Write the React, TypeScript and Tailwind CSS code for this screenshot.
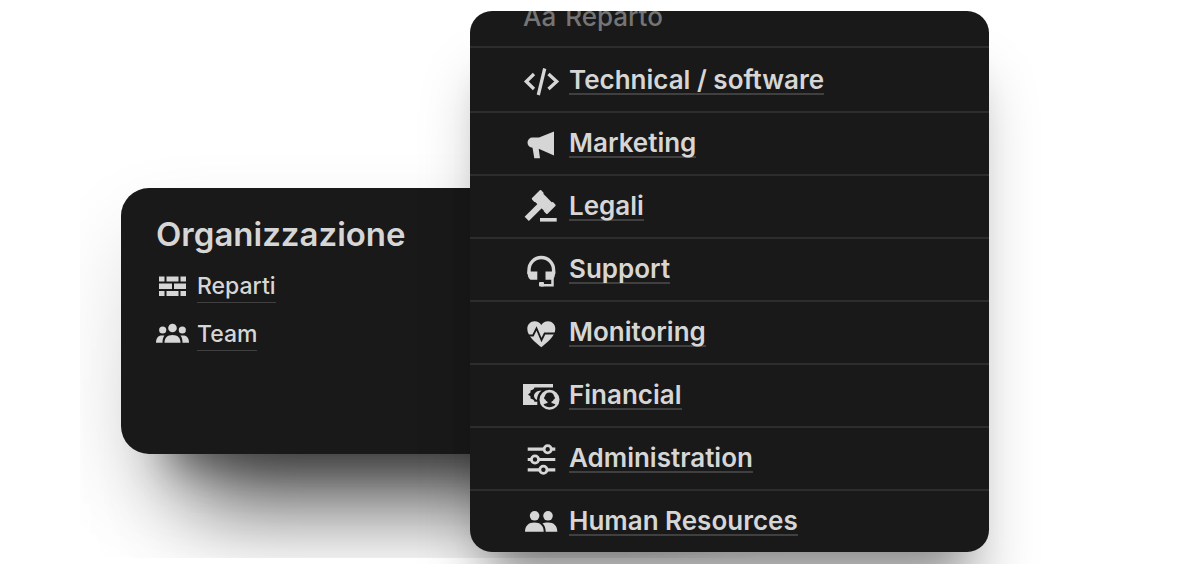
import type { ReactNode } from 'react';

interface Item {
  label: string;
  icon: ReactNode;
}

const pages: Item[] = [
  {
    label: 'Reparti',
    icon: (
      <>
        <path d="M3 6.5h5.5v5H3zM10.5 6.5h12v5h-12zM24.5 6.5H30v5h-5.5z" />
        <path d="M3 13.5h13V19H3zM18 13.5h12V19H18z" />
        <path d="M3 21h5.5v5H3zM10.5 21h12v5h-12zM24.5 21H30v5h-5.5z" />
      </>
    ),
  },
  {
    label: 'Team',
    icon: (
      <>
        <circle cx="16.5" cy="10" r="4.3" />
        <circle cx="6.7" cy="12" r="3.6" />
        <circle cx="26.3" cy="12" r="3.6" />
        <path d="M8.5 24.7c0-5 3-7.7 8-7.7s8 2.7 8 7.7z" />
        <path d="M0 24.7c0-4.5 2-7.2 6-7.2h2.5C7 19.5 6.5 22 6.5 24.7z" />
        <path d="M33 24.7c0-4.5-2-7.2-6-7.2h-2.5c1.5 2 2 4.5 2 7.2z" />
      </>
    ),
  },
];

const departments: Item[] = [
  {
    label: 'Technical / software',
    icon: <path d="M11 11L3.3 18.5L11 26M25.5 11L33.7 18.5L25.5 26M21.7 5.5L15.3 32" fill="none" stroke="currentColor" strokeWidth="3.3" />,
  },
  {
    label: 'Marketing',
    icon: <path d="M31 5.5L16 11.5H9.5a5 5.100 0 0 0 0 10.2L11.3 32.3H17L15.700 22.7L31 29.5z" />,
  },
  {
    label: 'Legali',
    icon: (
      <>
        <g transform="translate(20.7 13) rotate(45)">
          <rect x="-11" y="-6.5" width="5" height="13" rx="1" />
          <rect x="-7.5" y="-5.5" width="14" height="11.5" />
          <rect x="6" y="-6.5" width="5" height="13" rx="1" />
          <rect x="-3" y="4" width="6" height="20" />
        </g>
        <rect x="17" y="29" width="16.7" height="3.6" />
      </>
    ),
  },
  {
    label: 'Support',
    icon: (
      <>
        <path d="M6 22V18a12.3 12.5 0 0 1 24.6 0V22" fill="none" stroke="currentColor" strokeWidth="3.4" />
        <path d="M4.4 19.5h9.9v8.3H7.5q-3.1-2-3.1-8.3zM22.5 19.5h9.8q0 6.3-3.1 8.3h-6.7z" />
        <path d="M29.500 26v7.200H18" fill="none" stroke="currentColor" strokeWidth="2.5" />
        <rect x="16" y="30" width="5" height="4.5" rx="1" />
      </>
    ),
  },
  {
    label: 'Monitoring',
    icon: (
      <>
        <path d="M18.3 32.3C13 27.5 4.3 21.5 4.3 14C4.3 9.3 7.5 6.2 11.5 6.2c3 0 5.5 1.5 6.8 3.8c1.3-2.3 3.8-3.8 6.8-3.8c4 0 7.2 3.1 7.2 7.8c0 7.5-8.7 13.5-14 18.3z" />
        <path d="M4 20.5H10L13.5 13.5L18.5 25L21.7 18.5H33" fill="none" stroke="#191919" strokeWidth="1.8" />
      </>
    ),
  },
  {
    label: 'Financial',
    icon: (
      <>
        <path d="M0 6H30V9.5H11.5C11 11.500 9.5 12 7.5 12.5V14.5L5 16.5L7.5 18.5V20.5C9.5 21 11 21.5 11.5 23.7H14.3V27H0z" />
        <path d="M18.5 12.5c-5 0-7.5 3-7.5 5.500c0 1.500 1 3 3 4c0-4 1.500-7 4.500-9.500z" />
        <circle cx="26.5" cy="21.8" r="11.500" fill="#191919" />
        <circle cx="26.5" cy="21.8" r="10" />
        <path
          d="M26.5 14.5c-3 0-4.5 2-4.5 3.7c-1.3.6-1.3 2.8.3 3.3c.5 1.3 1.2 1.7 2.2 2.3v1.2c-1.5.5-3.2.7-4 1.5c2.700 3.500 9.300 3.500 12 0c-.8-.8-2.500-1-4-1.500v-1.200c1-.6 1.700-1 2.200-2.300c1.600-.5 1.600-2.700.3-3.300c0-1.700-1.500-3.700-4.500-3.700z"
          fill="#191919"
        />
      </>
    ),
  },
  {
    label: 'Administration',
    icon: (
      <g fill="none" stroke="currentColor">
        <path d="M4.7 8.2H21M28.5 8.2H32.3M4.7 18.5H8.5M15.5 18.5H32.3M4.7 28.8H17M24 28.8H32.3" strokeWidth="3.2" />
        <circle cx="24.7" cy="8.2" r="3.6" strokeWidth="2.8" />
        <circle cx="12" cy="18.5" r="3.6" strokeWidth="2.8" />
        <circle cx="20.4" cy="28.8" r="3.6" strokeWidth="2.8" />
      </g>
    ),
  },
  {
    label: 'Human Resources',
    icon: (
      <>
        <circle cx="11.6" cy="11.8" r="4.8" />
        <circle cx="25" cy="11.8" r="4.8" />
        <path d="M2 27.8c0-6 3.5-9.3 9.4-9.3s9.3 3.3 9.3 9.3z" />
        <path d="M22.7 27.8c0-3.5-1-6.5-3.2-8.3c1.5-.7 3.2-1 5.5-1c6 0 9.3 3.3 9.3 9.3z" />
      </>
    ),
  },
];

export default function App() {
  return (
    <main className="flex items-start overflow-hidden bg-white font-['Inter',sans-serif] text-[#d6d6d6]">
      <div className="ml-20 w-[61%] shrink-0 overflow-hidden pt-47 pr-12 pb-26 pl-[41px]">
        <section className="h-[266px] rounded-[28px] bg-[#191919] px-[35px] pt-6 shadow-[0_40px_90px_-10px_rgba(0,0,0,0.16),0_120px_90px_-70px_rgba(0,0,0,0.62),0_60px_40px_-50px_rgba(0,0,0,0.45)]">
          <h1 className="text-[33px] leading-[44px] font-semibold">Organizzazione</h1>
          <ul className="mt-[6px]">
            {pages.map((page) => (
              <li key={page.label} className="flex h-12 items-center gap-[9px]">
                <svg viewBox="0 0 32 32" className="size-8 overflow-visible" fill="currentColor" aria-hidden="true">
                  {page.icon}
                </svg>
                <a href="#" className="border-b border-[#404040] text-[23px] leading-8 font-medium">
                  {page.label}
                </a>
              </li>
            ))}
          </ul>
        </section>
      </div>

      <div className="relative -ml-[28.5%] w-[43.25%] shrink-0 pt-[11px] pb-3">
        <section className="rounded-[22px] bg-[#191919] shadow-[0_60px_60px_-10px_rgba(0,0,0,0.25),0_40px_40px_-30px_rgba(0,0,0,0.3)]">
          <div className="flex h-[37px] items-end gap-[9px] overflow-hidden border-b-2 border-[#2d2d2d] pb-4 pl-[53px] text-[26px] leading-[26px] font-medium text-[#757575]">
            <span>Aa</span>
            <span>Reparto</span>
          </div>
          <ul className="pt-[2px]">
            {departments.map((item) => (
              <li key={item.label} className="flex h-[63px] items-center gap-[10px] border-b-2 border-[#2d2d2d] pl-[53px] last:h-[61px] last:border-b-0">
                <svg viewBox="0 0 36 36" className="size-9 overflow-visible" fill="currentColor" aria-hidden="true">
                  {item.icon}
                </svg>
                <a href="#" className="border-b-2 border-[#404040] text-[26px] leading-[26px] font-semibold">
                  {item.label}
                </a>
              </li>
            ))}
          </ul>
        </section>
      </div>
    </main>
  );
}
